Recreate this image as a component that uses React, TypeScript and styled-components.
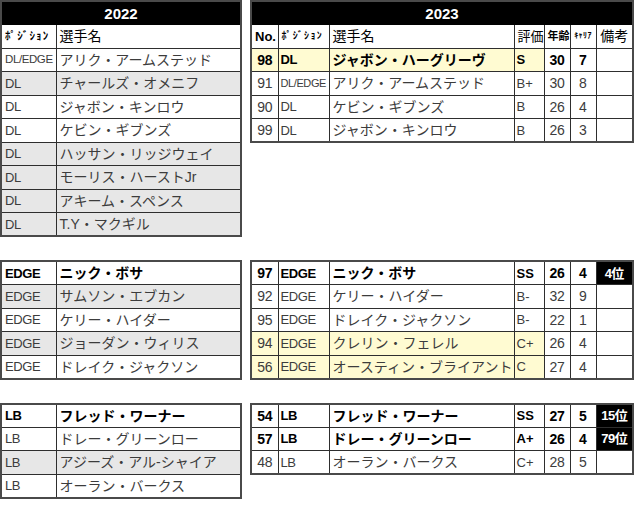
import React from 'react';
import styled, {createGlobalStyle} from 'styled-components';

const GlobalStyle = createGlobalStyle`
    html, body {
        margin: 0;
        padding: 0;
        background: #ffffff;
    }

    body {
        font-family: "Liberation Sans", "Noto Sans CJK JP", sans-serif;
        color: #3a3a3a;
    }
`;

type Tone = 'white' | 'grey' | 'yellow' | 'black';

const TONES: Record<Tone, string> = {
    white: '#ffffff',
    grey: '#e7e7e7',
    yellow: '#fffbd2',
    black: '#000000',
};

const Sheet = styled.div`
    display: flex;
    flex-direction: column;
    gap: 23px;
    width: 640px;
`;

const Section = styled.div`
    display: flex;
    align-items: flex-start;
    gap: 8px;
`;

const Table = styled.table<{$width: number}>`
    width: ${(p) => p.$width}px;
    border-collapse: collapse;
    table-layout: fixed;
    border: 2px solid #4a4a4a;
`;

const TitleCell = styled.th`
    height: 22px;
    padding: 0;
    background: #000000;
    color: #ffffff;
    font-size: 15px;
    font-weight: 700;
    text-align: center;
    border: 1px solid #000000;
`;

const Row = styled.tr`
    height: 23.5px;
`;

const Cell = styled.td<{
    $tone?: Tone;
    $bold?: boolean;
    $align?: 'left' | 'center' | 'right';
    $size?: number;
    $spacing?: number;
    $ink?: string;
}>`
    padding: 0 3px;
    background: ${(p) => TONES[p.$tone || 'white']};
    color: ${(p) => (p.$tone === 'black' ? '#ffffff' : p.$ink || (p.$bold ? '#000000' : '#3c3c3c'))};
    font-weight: ${(p) => (p.$bold ? 700 : 400)};
    font-size: ${(p) => p.$size || 14}px;
    letter-spacing: ${(p) => p.$spacing || 0}px;
    text-align: ${(p) => p.$align || 'left'};
    white-space: nowrap;
    overflow: hidden;
    border: 1px solid #2e2e2e;
    line-height: 1;
`;

type LeftRow = {pos: string; name: string; tone?: Tone; bold?: boolean};

type RightRow = {
    no: string;
    pos: string;
    name: string;
    grade: string;
    age: string;
    career: string;
    note?: string;
    yellow?: boolean;
    bold?: boolean;
};

const LEFT_COLS = [55, 185];
const RIGHT_COLS = [27, 51, 185, 30, 26, 26, 37];

const dlLeft: LeftRow[] = [
    {pos: 'DL/EDGE', name: 'アリク・アームステッド'},
    {pos: 'DL', name: 'チャールズ・オメニフ', tone: 'grey'},
    {pos: 'DL', name: 'ジャボン・キンロウ'},
    {pos: 'DL', name: 'ケビン・ギブンズ'},
    {pos: 'DL', name: 'ハッサン・リッジウェイ', tone: 'grey'},
    {pos: 'DL', name: 'モーリス・ハーストJr', tone: 'grey'},
    {pos: 'DL', name: 'アキーム・スペンス', tone: 'grey'},
    {pos: 'DL', name: 'T.Y・マクギル', tone: 'grey'},
];

const dlRight: RightRow[] = [
    {no: '98', pos: 'DL', name: 'ジャボン・ハーグリーヴ', grade: 'S', age: '30', career: '7', yellow: true, bold: true},
    {no: '91', pos: 'DL/EDGE', name: 'アリク・アームステッド', grade: 'B+', age: '30', career: '8'},
    {no: '90', pos: 'DL', name: 'ケビン・ギブンズ', grade: 'B', age: '26', career: '4'},
    {no: '99', pos: 'DL', name: 'ジャボン・キンロウ', grade: 'B', age: '26', career: '3'},
];

const edgeLeft: LeftRow[] = [
    {pos: 'EDGE', name: 'ニック・ボサ', bold: true},
    {pos: 'EDGE', name: 'サムソン・エブカン', tone: 'grey'},
    {pos: 'EDGE', name: 'ケリー・ハイダー'},
    {pos: 'EDGE', name: 'ジョーダン・ウィリス', tone: 'grey'},
    {pos: 'EDGE', name: 'ドレイク・ジャクソン'},
];

const edgeRight: RightRow[] = [
    {no: '97', pos: 'EDGE', name: 'ニック・ボサ', grade: 'SS', age: '26', career: '4', note: '4位', bold: true},
    {no: '92', pos: 'EDGE', name: 'ケリー・ハイダー', grade: 'B-', age: '32', career: '9'},
    {no: '95', pos: 'EDGE', name: 'ドレイク・ジャクソン', grade: 'B-', age: '22', career: '1'},
    {no: '94', pos: 'EDGE', name: 'クレリン・フェレル', grade: 'C+', age: '26', career: '4', yellow: true},
    {no: '56', pos: 'EDGE', name: 'オースティン・ブライアント', grade: 'C', age: '27', career: '4', yellow: true},
];

const lbLeft: LeftRow[] = [
    {pos: 'LB', name: 'フレッド・ワーナー', bold: true},
    {pos: 'LB', name: 'ドレー・グリーンロー'},
    {pos: 'LB', name: 'アジーズ・アル-シャイア', tone: 'grey'},
    {pos: 'LB', name: 'オーラン・バークス'},
];

const lbRight: RightRow[] = [
    {no: '54', pos: 'LB', name: 'フレッド・ワーナー', grade: 'SS', age: '27', career: '5', note: '15位', bold: true},
    {no: '57', pos: 'LB', name: 'ドレー・グリーンロー', grade: 'A+', age: '26', career: '4', note: '79位', bold: true},
    {no: '48', pos: 'LB', name: 'オーラン・バークス', grade: 'C+', age: '28', career: '5'},
];

const Cols = ({widths}: {widths: number[]}) => (
    <colgroup>
        {widths.map((w, i) => (
            <col
                key={i}
                style={{width: w}}
            />
        ))}
    </colgroup>
);

// long position labels (DL/EDGE) are squeezed a bit to fit the column
const posSize = (pos: string) => (pos.length > 5 ? 11.5 : 13);

const LeftTable = ({rows, title}: {rows: LeftRow[]; title?: string}) => (
    <Table $width={240}>
        <Cols widths={LEFT_COLS}/>
        <tbody>
            {title && (
                <tr>
                    <TitleCell colSpan={2}>{title}</TitleCell>
                </tr>
            )}
            {title && (
                <Row>
                    <Cell
                        $size={11}
                        $spacing={1.2}
                        $bold={true}
                    >
                        {'ﾎﾟｼﾞｼｮﾝ'}
                    </Cell>
                    <Cell $ink='#000000'>{'選手名'}</Cell>
                </Row>
            )}
            {rows.map((r) => (
                <Row key={r.name}>
                    <Cell
                        $tone={r.tone}
                        $bold={r.bold}
                        $size={posSize(r.pos)}
                        $spacing={-0.4}
                    >
                        {r.pos}
                    </Cell>
                    <Cell
                        $tone={r.tone}
                        $bold={r.bold}
                    >
                        {r.name}
                    </Cell>
                </Row>
            ))}
        </tbody>
    </Table>
);

const RightTable = ({rows, title}: {rows: RightRow[]; title?: string}) => (
    <Table $width={382}>
        <Cols widths={RIGHT_COLS}/>
        <tbody>
            {title && (
                <tr>
                    <TitleCell colSpan={7}>{title}</TitleCell>
                </tr>
            )}
            {title && (
                <Row>
                    <Cell
                        $bold={true}
                        $size={13}
                        $align='center'
                    >
                        {'No.'}
                    </Cell>
                    <Cell
                        $size={10}
                        $spacing={1.3}
                        $bold={true}
                    >
                        {'ﾎﾟｼﾞｼｮﾝ'}
                    </Cell>
                    <Cell $ink='#000000'>{'選手名'}</Cell>
                    <Cell
                        $ink='#000000'
                        $size={13}
                    >
                        {'評価'}
                    </Cell>
                    <Cell
                        $bold={true}
                        $size={11}
                        $align='center'
                    >
                        {'年齢'}
                    </Cell>
                    <Cell
                        $size={8}
                        $spacing={0.4}
                        $bold={true}
                        $align='center'
                    >
                        {'ｷｬﾘｱ'}
                    </Cell>
                    <Cell
                        $ink='#000000'
                        $align='center'
                    >
                        {'備考'}
                    </Cell>
                </Row>
            )}
            {rows.map((r) => {
                const tone: Tone = r.yellow ? 'yellow' : 'white';
                return (
                    <Row key={r.no}>
                        <Cell
                            $tone={tone}
                            $bold={r.bold}
                            $align='center'
                            $spacing={-0.4}
                        >
                            {r.no}
                        </Cell>
                        <Cell
                            $tone={tone}
                            $bold={r.bold}
                            $size={r.pos.length > 5 ? 11 : 13}
                            $spacing={-0.4}
                            style={{paddingLeft: 2}}
                        >
                            {r.pos}
                        </Cell>
                        <Cell
                            $tone={tone}
                            $bold={r.bold}
                        >
                            {r.name}
                        </Cell>
                        <Cell
                            $tone={tone}
                            $bold={r.bold}
                            $size={13}
                            style={{paddingLeft: 2}}
                        >
                            {r.grade}
                        </Cell>
                        <Cell
                            $bold={r.bold}
                            $align='center'
                            $spacing={-0.4}
                        >
                            {r.age}
                        </Cell>
                        <Cell
                            $bold={r.bold}
                            $align='center'
                        >
                            {r.career}
                        </Cell>
                        <Cell
                            $tone={r.note ? 'black' : 'white'}
                            $bold={true}
                            $size={13}
                            $spacing={-0.5}
                            $align='center'
                        >
                            {r.note || ''}
                        </Cell>
                    </Row>
                );
            })}
        </tbody>
    </Table>
);

const App = () => (
    <>
        <GlobalStyle/>
        <Sheet>
            <Section>
                <LeftTable
                    title='2022'
                    rows={dlLeft}
                />
                <RightTable
                    title='2023'
                    rows={dlRight}
                />
            </Section>
            <Section>
                <LeftTable rows={edgeLeft}/>
                <RightTable rows={edgeRight}/>
            </Section>
            <Section>
                <LeftTable rows={lbLeft}/>
                <RightTable rows={lbRight}/>
            </Section>
        </Sheet>
    </>
);

export default App;
